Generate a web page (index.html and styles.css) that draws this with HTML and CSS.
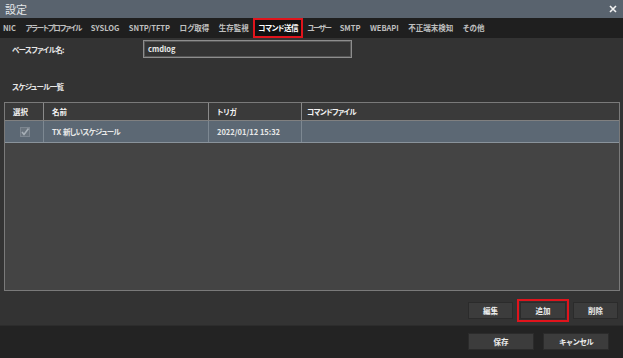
FILE: index.html
```html
<!doctype html>
<html>

<head>
    <meta charset="utf-8">
    <title>設定</title>
    <link rel="stylesheet" href="styles.css">
</head>

<body>
<div class="window">
    <!--Title bar-->
    <div class="titlebar">
        <span class="title">設定</span>
        <svg class="close" width="8" height="8" viewBox="0 0 8 8">
            <path d="M1 1 L7 7 M7 1 L1 7" stroke="#f2f2f2" stroke-width="1.6"/>
        </svg>
    </div>

    <!--Tabs-->
    <div class="tabs">
        <span class="tab">NIC</span>
        <span class="tab kana-long">アラートプロファイル</span>
        <span class="tab">SYSLOG</span>
        <span class="tab">SNTP/TFTP</span>
        <span class="tab">ログ取得</span>
        <span class="tab">生存監視</span>
        <span class="tab active">コマンド送信</span>
        <span class="tab kana">ユーザー</span>
        <span class="tab">SMTP</span>
        <span class="tab">WEBAPI</span>
        <span class="tab">不正端末検知</span>
        <span class="tab">その他</span>
    </div>

    <!--Main area-->
    <div class="content">
        <div class="field">
            <span class="label jp">ベースファイル名:</span>
            <div class="input">cmdlog</div>
        </div>

        <div class="section jp">スケジュール一覧</div>

        <div class="grid">
            <div class="grid-head">
                <div class="cell c1">選択</div>
                <div class="cell c2">名前</div>
                <div class="cell c3">トリガ</div>
                <div class="cell c4 jp">コマンドファイル</div>
            </div>
            <div class="grid-row">
                <div class="cell c1">
                    <svg width="10" height="10" viewBox="0 0 10 10">
                        <rect x="0.5" y="0.5" width="9" height="9" fill="#6a747e" stroke="#7d8690"/>
                        <path d="M2 5 L4 7.5 L8.5 1.5" fill="none" stroke="#a7afb7" stroke-width="1.6"/>
                    </svg>
                </div>
                <div class="cell c2"><span>TX</span>&nbsp;<span class="jp">新しいスケジュール</span></div>
                <div class="cell c3">2022/01/12 15:32</div>
                <div class="cell c4"></div>
            </div>
        </div>

        <div class="actions">
            <button class="btn small">編集</button>
            <button class="btn small marked">追加</button>
            <button class="btn small">削除</button>
        </div>
    </div>

    <!--Footer buttons-->
    <div class="footer">
        <button class="btn wide">保存</button>
        <button class="btn wide jp">キャンセル</button>
    </div>
</div>
</body>

</html>
```

FILE: styles.css
```css
body{margin:0; background:#232323; font-family:"Noto Sans CJK JP", "Noto Sans", sans-serif; font-feature-settings:"palt"; color:#e8e8e8;}
.window{width:623px; height:358px; display:flex; flex-direction:column; overflow:hidden;}
/*Kana heavy labels run narrower in the original UI font*/
.jp{letter-spacing:-0.7px;}

/*Title bar*/
.titlebar{height:18px; background:#59636e; display:flex; align-items:center; justify-content:space-between; padding:0 6px 0 5px;}
.title{font-size:11px; color:#e4e7ea; line-height:18px;}
.close{display:block;}

/*Tab strip*/
.tabs{height:20px; background:#1f1f1f; display:flex; align-items:center; padding-left:3px; gap:9.5px;}
.tab{font-size:7.5px; font-weight:700; color:#c0c0c0; white-space:nowrap; line-height:16px;}
.tab.kana{letter-spacing:-1.6px;}
.tab.kana-long{letter-spacing:-1.3px;}
.tab.active{color:#fff; background:#111; border:2px solid #e0141c; padding:0 3px; margin:0 -5px; letter-spacing:-0.5px;}

/*Content*/
.content{flex:1; background:#333; display:flex; flex-direction:column; padding:2px 3px 4px 4px;}
.field{display:flex; align-items:center; height:18px;}
.label{width:139px; padding-left:8px; box-sizing:border-box; font-size:7.5px; font-weight:700;}
.input{width:209px; height:18px; box-sizing:border-box; border:1px solid #8d8d8d; background:#333; font-size:7.5px; font-weight:700; line-height:16px; padding-left:4px; outline:1px solid #555; outline-offset:-2px;}
.section{font-size:7.5px; font-weight:700; margin:21px 0 0 8px; height:23px; line-height:16px;}

/*Schedule grid*/
.grid{height:189px; box-sizing:border-box; border:1px solid #7a7a7a; background:#444; display:flex; flex-direction:column;}
.grid-head, .grid-row{display:flex;}
.grid-head{height:17px; background:#3a3a3a; border-bottom:1px solid #808080;}
.grid-row{height:21px; background:#5c6874; border-bottom:1px solid #8a939b;}
.cell{font-size:7.5px; font-weight:700; display:flex; align-items:center; padding-left:8px; box-sizing:border-box; border-right:1px solid #777; white-space:nowrap;}
.grid-head .cell{border-right:1px solid #8a8a8a; color:#f4f4f4;}
.c1{width:39px;}
.c2{width:165px;}
.c3{width:93px;}
.c4{flex:1; border-right:none;}
.c4.jp{padding-left:5px;}
.grid-row .c1{padding-left:15px;}
.grid-row .cell{border-right-color:#7d8892;}
.grid-head .c4{border-right:none;}

/*Buttons*/
.actions{display:flex; justify-content:flex-end; gap:6px; margin-top:11px; padding-right:2px;}
.btn{font-family:inherit; font-size:7.5px; font-weight:700; color:#eee; background:#3c3c3c; border:1px solid #2b2b2b; padding:0; height:17px; cursor:pointer;}
.small{width:45px;}
.marked{outline:2px solid #e0141c; outline-offset:1px; width:46px; margin:0 1px;}
.footer{height:33px; background:#232323; display:flex; justify-content:flex-end; align-items:flex-start; gap:9px; padding:7px 14px 0 0; box-sizing:border-box; border-top:1px solid #2c2c2c;}
.wide{width:66px;}
```
